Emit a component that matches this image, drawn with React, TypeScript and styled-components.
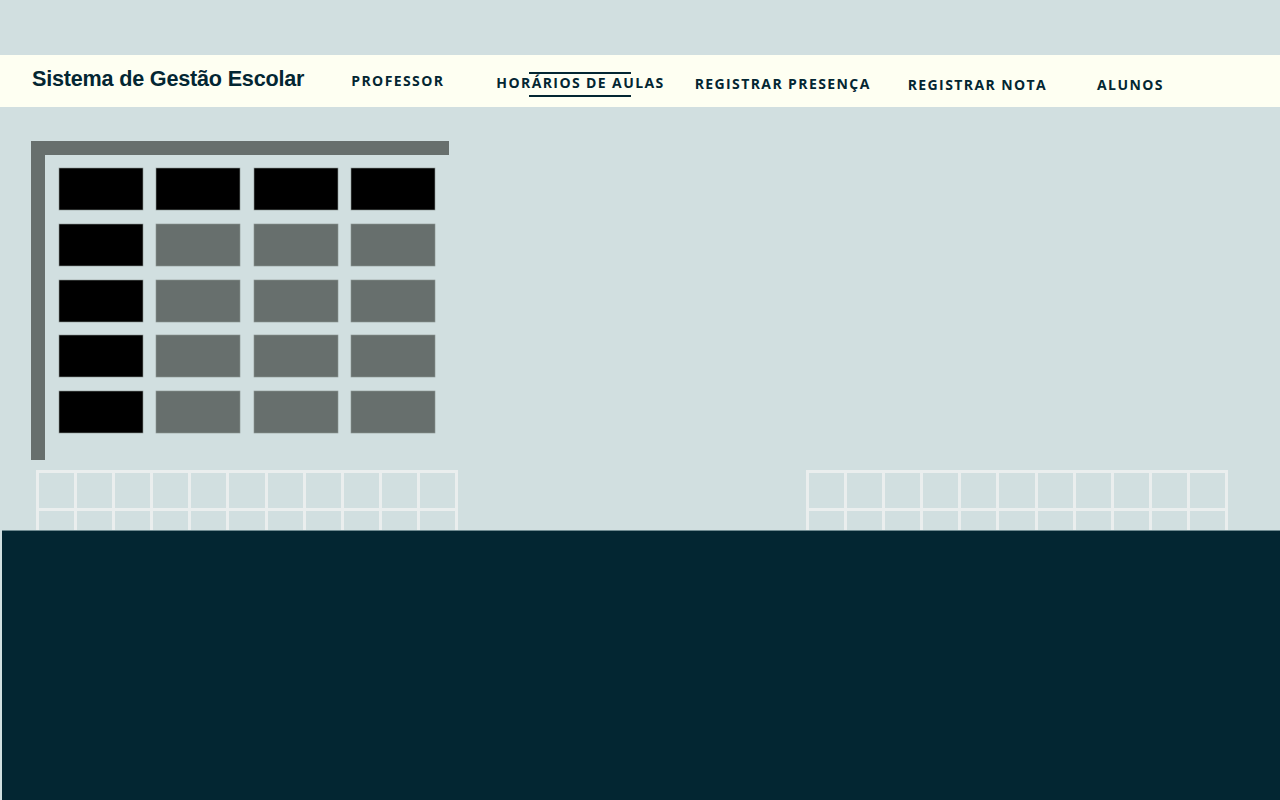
import React from "react";
import styled, { createGlobalStyle } from "styled-components";

const Global = createGlobalStyle`
  html, body { margin: 0; padding: 0; }
  body {
    background: #d1dfe0;
    width: 1280px;
    height: 800px;
    overflow: hidden;
    font-family: "Open Sans", sans-serif;
  }
`;

const Page = styled.div`
  display: flex;
  flex-direction: column;
  width: 1280px;
  height: 800px;
`;

const TopSpace = styled.div`
  height: 55px;
`;

const Header = styled.header`
  height: 52px;
  background: #fefff2;
  display: flex;
  align-items: center;
  padding-left: 32px;
`;

const Title = styled.h1`
  margin: 0;
  font-family: "Liberation Sans", Arial, sans-serif;
  font-weight: 700;
  font-size: 21.6px;
  color: #032632;
  letter-spacing: -0.2px;
  transform: translateY(-2px);
`;

const Nav = styled.nav`
  display: flex;
  align-items: center;
  height: 100%;
`;

const NavItem = styled.a<{ $ml: number; $dy: number; $active?: boolean }>`
  position: relative;
  margin-left: ${(p) => p.$ml}px;
  font-family: "Open Sans", sans-serif;
  font-weight: 700;
  font-size: 14px;
  line-height: 19px;
  letter-spacing: 1.4px;
  color: #032632;
  text-transform: uppercase;
  transform: translateY(${(p) => p.$dy}px);
  white-space: nowrap;
  ${(p) =>
    p.$active
      ? `
    &::before, &::after {
      content: "";
      position: absolute;
      left: 33px;
      width: 102px;
      height: 2px;
      background: #032632;
    }
    &::before { top: -1px; }
    &::after { bottom: -5px; }
  `
      : ""}
`;

const Main = styled.main`
  display: flex;
  flex-direction: column;
  padding-top: 34px;
`;

const IconWrap = styled.div`
  margin-left: 31px;
  width: 418px;
  height: 319px;
`;

const GridRow = styled.div`
  display: flex;
  margin-top: 10px;
  height: 60px;
  overflow: hidden;
`;

const LineGrid = styled.div<{ $ml: number }>`
  margin-left: ${(p) => p.$ml}px;
  width: 422px;
  height: 80px;
  display: grid;
  grid-template-columns: repeat(11, 1fr);
  grid-template-rows: repeat(2, 38px);
  border-top: 3px solid #eaeeee;
  border-left: 3px solid #eaeeee;
  box-sizing: border-box;
`;

const LineCell = styled.div`
  border-right: 3px solid #eaeeee;
  border-bottom: 3px solid #eaeeee;
`;

const Footer = styled.div`
  flex: 1;
  margin-left: 2px;
  background: #032632;
  border-top: 1px solid #6f8a90;
`;

function ScheduleIcon() {
  const cols = [59, 156, 254, 351];
  const rows = [168, 224, 280, 335, 391];
  return (
    <svg width="418" height="319" viewBox="31 141 418 319">
      <rect x="31" y="141" width="14" height="319" fill="#676f6d" />
      <rect x="31" y="141" width="418" height="14" fill="#676f6d" />
      {rows.map((y, ri) =>
        cols.map((x, ci) => (
          <rect
            key={`${ri}-${ci}`}
            x={x}
            y={y}
            width="84"
            height="42"
            fill={ri === 0 || ci === 0 ? "#000000" : "#676f6d"}
            stroke="#8a9492"
            strokeWidth="0.6"
          />
        ))
      )}
    </svg>
  );
}

const navItems = [
  { label: "Professor", ml: 47, dy: -1 },
  { label: "Horários de Aulas", ml: 52, dy: 1, active: true },
  { label: "Registrar Presença", ml: 30, dy: 2 },
  { label: "Registrar Nota", ml: 37, dy: 3 },
  { label: "Alunos", ml: 50, dy: 3 },
];

export default function App() {
  return (
    <>
      <Global />
      <Page>
        <TopSpace />
        <Header>
          <Title>Sistema de Gestão Escolar</Title>
          <Nav>
            {navItems.map((n) => (
              <NavItem key={n.label} $ml={n.ml} $dy={n.dy} $active={n.active}>
                {n.label}
              </NavItem>
            ))}
          </Nav>
        </Header>
        <Main>
          <IconWrap>
            <ScheduleIcon />
          </IconWrap>
          <GridRow>
            <LineGrid $ml={36}>
              {Array.from({ length: 22 }).map((_, i) => (
                <LineCell key={i} />
              ))}
            </LineGrid>
            <LineGrid $ml={348}>
              {Array.from({ length: 22 }).map((_, i) => (
                <LineCell key={i} />
              ))}
            </LineGrid>
          </GridRow>
        </Main>
        <Footer />
      </Page>
    </>
  );
}
